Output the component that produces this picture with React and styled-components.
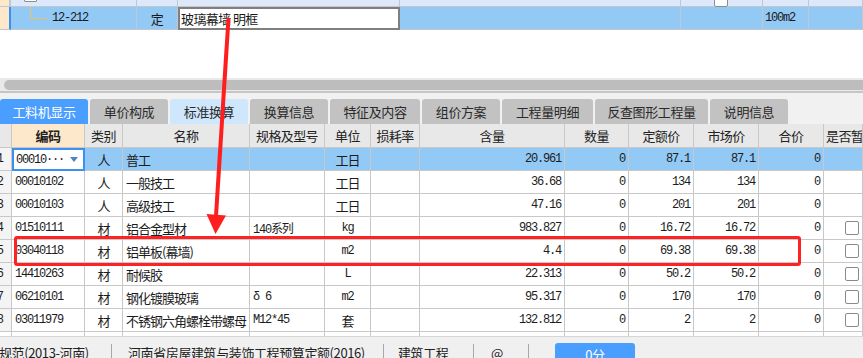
import React from 'react';
import styled, { createGlobalStyle } from 'styled-components';

const CJK = '"Noto Sans CJK SC", "Noto Sans", sans-serif';
const MONO = '"Liberation Mono", "Noto Sans CJK SC", monospace';

const COLS = '12px 73px 38px 127px 75px 46px 49px 145px 64px 65px 65px 65px 1fr';
const TOP_COLS = '11px 126px 41px 222px 281px 82px 46px 1fr';

const GlobalStyle = createGlobalStyle`
    html, body {
        margin: 0;
        padding: 0;
        background: #ffffff;
        overflow: hidden;
    }
    body {
        font-family: ${CJK};
        font-size: 12px;
        color: #1a1a1a;
    }
`;

const Page = styled.div`
    position: relative;
    width: 863px;
    height: 358px;
    overflow: hidden;
    display: flex;
    flex-direction: column;
    background: #ffffff;
`;

const TopRow = styled.div`
    display: grid;
    grid-template-columns: ${TOP_COLS};
    height: ${p => p.$h}px;
    background: ${p => p.$bg};
    flex-shrink: 0;
`;

const TopCell = styled.div`
    position: relative;
    box-sizing: border-box;
    border-right: 1px solid #c2c7cf;
    border-bottom: 1px solid #c2c7cf;
    display: flex;
    align-items: center;
    padding-left: ${p => p.$pad || 0}px;
    justify-content: ${p => p.$center ? 'center' : 'flex-start'};
    font-family: ${p => p.$mono ? MONO : CJK};
    font-size: ${p => p.$mono ? '12px' : '13px'};
    letter-spacing: ${p => p.$mono ? '-1.2px' : '-0.6px'};
    overflow: ${p => p.$open ? 'visible' : 'hidden'};
    white-space: nowrap;
`;

const Leader = styled(TopCell)`
    background: #fde8cc;
    border-right: 2px solid ${p => p.$active ? '#3d8ff0' : '#c2c7cf'};
`;

const TreeCell = styled(TopCell)`
    overflow: visible;
    &::before {
        content: '';
        position: absolute;
        left: 19px;
        top: 0;
        width: 16px;
        height: 11px;
        border-left: 1px solid #f5bd62;
        border-bottom: 1px solid #f5bd62;
    }
`;

const NodeBox = styled.div`
    position: absolute;
    left: 13px;
    top: -7px;
    width: 11px;
    height: 7px;
    border: 1px solid #8d8d8d;
    border-radius: 1px;
    background: #ffffff;
`;

const EditBox = styled.div`
    box-sizing: border-box;
    border: 2px solid #7f7f7f;
    background: #ffffff;
    display: flex;
    align-items: center;
    padding-left: 1px;
    font-size: 13px;
    letter-spacing: -0.6px;
    white-space: nowrap;
`;

const TinyCheck = styled.div`
    position: absolute;
    left: 33px;
    top: -7px;
    width: 12px;
    height: 12px;
    border: 1px solid #8d8d8d;
    border-radius: 2px;
    background: #ffffff;
`;

const Blank = styled.div`
    height: 48px;
    flex-shrink: 0;
    background: #ffffff;
`;

const ScrollZone = styled.div`
    flex-shrink: 0;
    background: #e9e9e9;
    border-bottom: 2px solid #c6c6c6;
    padding: 2px 0 0 4px;
    height: 11px;
`;

const Thumb = styled.div`
    height: 10px;
    background: #bdbdbd;
    border-radius: 5px 0 0 5px;
`;

const TabBar = styled.div`
    height: 31px;
    box-sizing: border-box;
    flex-shrink: 0;
    background: #f1f1f1;
    display: flex;
    align-items: flex-end;
    gap: 2px;
`;

const Tab = styled.div`
    width: ${p => p.$w}px;
    height: 25px;
    flex-shrink: 0;
    border-radius: 3px 3px 0 0;
    display: flex;
    align-items: center;
    justify-content: center;
    font-size: 13px;
    letter-spacing: -0.4px;
    background: ${p => p.$active ? '#4a9eff' : p.$soft ? '#cfe7fc' : '#c2c2c2'};
    color: ${p => p.$active ? '#ffffff' : '#2a2a2a'};
`;

const Row = styled.div`
    display: grid;
    grid-template-columns: ${COLS};
    height: ${p => p.$h || 23}px;
    flex-shrink: 0;
    background: ${p => p.$bg || '#ffffff'};
`;

const Cell = styled.div`
    box-sizing: border-box;
    border-right: 1px solid #c8c8c8;
    border-bottom: 1px solid #c8c8c8;
    display: flex;
    align-items: center;
    overflow: hidden;
    white-space: nowrap;
    justify-content: ${p => p.$align === 'right' ? 'flex-end' : p.$align === 'center' ? 'center' : 'flex-start'};
    padding: 0 ${p => p.$align === 'right' ? 3 : 0}px 0 ${p => p.$align === 'left' ? 3 : 0}px;
    font-family: ${p => p.$mono ? MONO : CJK};
    font-size: ${p => p.$mono ? '12px' : '13px'};
    letter-spacing: ${p => p.$mono ? '-1.2px' : '-1px'};
    color: #1c1c1c;
    background: ${p => p.$bg || 'transparent'};
`;

const HeadCell = styled(Cell)`
    background: ${p => p.$bg || '#e8e8e8'};
    font-weight: ${p => p.$bold ? 700 : 400};
    font-size: 13px;
    letter-spacing: -0.6px;
    color: #222222;
`;

const NumCell = styled(Cell)`
    justify-content: flex-end;
    padding-right: 8px;
    background: #f4f4f4;
    font-family: ${MONO};
    font-size: 12px;
`;

const CodeEdit = styled.div`
    box-sizing: border-box;
    border: 2px solid #3d8ff0;
    background: #ffffff;
    display: flex;
    align-items: center;
    justify-content: space-between;
    padding: 0 5px 0 2px;
    font-family: ${MONO};
    font-size: 12px;
    letter-spacing: -1.2px;
    white-space: nowrap;
`;

const Caret = styled.span`
    width: 0;
    height: 0;
    border-left: 4px solid transparent;
    border-right: 4px solid transparent;
    border-top: 5px solid #4f82c2;
`;

const Check = styled.div`
    width: 12px;
    height: 12px;
    margin-left: 21px;
    border: 1px solid #8a8a8a;
    border-radius: 2px;
    background: #ffffff;
`;

const StatusBar = styled.div`
    height: 22px;
    flex-shrink: 0;
    box-sizing: border-box;
    border-top: 1px solid #d6d6d6;
    background: #f0f0f0;
    display: flex;
    align-items: flex-start;
    padding-top: 7px;
    font-size: 13px;
    letter-spacing: -0.4px;
    color: #222222;
    white-space: nowrap;
`;

const StatusItem = styled.span`
    width: ${p => p.$w}px;
    flex-shrink: 0;
    padding-left: ${p => p.$pl || 0}px;
    box-sizing: border-box;
    overflow: hidden;
    line-height: 18px;
    border-right: ${p => p.$sep ? '1px solid #a8a8a8' : 'none'};
    height: 16px;
`;

const ScoreButton = styled.div`
    margin-left: 26px;
    width: 80px;
    height: 20px;
    margin-top: -1px;
    border-radius: 3px;
    background: #4a9eff;
    color: #ffffff;
    display: flex;
    justify-content: center;
    padding-top: 2px;
    box-sizing: border-box;
    font-size: 13px;
`;

const Highlight = styled.div`
    position: absolute;
    left: 14px;
    top: 236px;
    width: 787px;
    height: 30px;
    box-sizing: border-box;
    border: 3px solid #ff2222;
    border-radius: 3px;
    pointer-events: none;
`;

const Overlay = styled.svg`
    position: absolute;
    left: 0;
    top: 0;
    pointer-events: none;
`;

const tabs = [
    { t: '工料机显示', w: 88, active: true },
    { t: '单价构成', w: 78 },
    { t: '标准换算', w: 78, soft: true },
    { t: '换算信息', w: 78 },
    { t: '特征及内容', w: 90 },
    { t: '组价方案', w: 78 },
    { t: '工程量明细', w: 91 },
    { t: '反查图形工程量', w: 113 },
    { t: '说明信息', w: 78 },
];

const rows = [
    { code: '00010102', kind: '人', name: '一般技工', spec: '', unit: '工日', qty: '36.68', dp: '134', mp: '134' },
    { code: '00010103', kind: '人', name: '高级技工', spec: '', unit: '工日', qty: '47.16', dp: '201', mp: '201' },
    { code: '01510111', kind: '材', name: '铝合金型材', spec: '140系列', unit: 'kg', qty: '983.827', dp: '16.72', mp: '16.72', check: true },
    { code: '03040118', kind: '材', name: '铝单板(幕墙)', spec: '', unit: 'm2', qty: '4.4', dp: '69.38', mp: '69.38', check: true },
    { code: '14410263', kind: '材', name: '耐候胶', spec: '', unit: 'L', qty: '22.313', dp: '50.2', mp: '50.2', check: true },
    { code: '06210101', kind: '材', name: '钢化镀膜玻璃', spec: 'δ 6', unit: 'm2', qty: '95.317', dp: '170', mp: '170', check: true },
    { code: '03011979', kind: '材', name: '不锈钢六角螺栓带螺母', spec: 'M12*45', unit: '套', qty: '132.812', dp: '2', mp: '2', check: true },
];

const isLatin = s => /^[\x00-\x7f]+$/.test(s);

export default function App() {
    return (
        <>
            <GlobalStyle />
            <Page>
                <TopRow $h={7} $bg="#dde9fb">
                    <Leader />
                    <TopCell $open><NodeBox /></TopCell>
                    <TopCell />
                    <TopCell />
                    <TopCell />
                    <TopCell $open><TinyCheck /></TopCell>
                    <TopCell />
                    <TopCell />
                </TopRow>
                <TopRow $h={23} $bg="#93c9f5">
                    <Leader $active />
                    <TreeCell $mono $pad={41}>12-212</TreeCell>
                    <TopCell $center>定</TopCell>
                    <EditBox>玻璃幕墙 明框</EditBox>
                    <TopCell />
                    <TopCell />
                    <TopCell $mono $pad={2}>100m2</TopCell>
                    <TopCell />
                </TopRow>

                <Blank />
                <ScrollZone><Thumb /></ScrollZone>

                <TabBar>
                    {tabs.map(tab => (
                        <Tab key={tab.t} $w={tab.w} $active={tab.active} $soft={tab.soft}>{tab.t}</Tab>
                    ))}
                </TabBar>

                <Row $h={24}>
                    <HeadCell />
                    <HeadCell $align="center" $bg="#fde8cc" $bold>编码</HeadCell>
                    <HeadCell $align="center">类别</HeadCell>
                    <HeadCell $align="center">名称</HeadCell>
                    <HeadCell $align="center">规格及型号</HeadCell>
                    <HeadCell $align="center">单位</HeadCell>
                    <HeadCell $align="center">损耗率</HeadCell>
                    <HeadCell $align="center">含量</HeadCell>
                    <HeadCell $align="center">数量</HeadCell>
                    <HeadCell $align="center">定额价</HeadCell>
                    <HeadCell $align="center">市场价</HeadCell>
                    <HeadCell $align="center">合价</HeadCell>
                    <HeadCell $align="left" style={{ paddingLeft: 2 }}>是否暂</HeadCell>
                </Row>

                <Row $bg="#93c9f5">
                    <NumCell>1</NumCell>
                    <CodeEdit>00010···<Caret /></CodeEdit>
                    <Cell $align="center">人</Cell>
                    <Cell $align="left">普工</Cell>
                    <Cell />
                    <Cell $align="center">工日</Cell>
                    <Cell />
                    <Cell $align="right" $mono>20.961</Cell>
                    <Cell $align="right" $mono>0</Cell>
                    <Cell $align="right" $mono>87.1</Cell>
                    <Cell $align="right" $mono>87.1</Cell>
                    <Cell $align="right" $mono>0</Cell>
                    <Cell />
                </Row>

                {rows.map((r, i) => (
                    <Row key={r.code}>
                        <NumCell>{i + 2}</NumCell>
                        <Cell $align="left" $mono>{r.code}</Cell>
                        <Cell $align="center">{r.kind}</Cell>
                        <Cell $align="left">{r.name}</Cell>
                        <Cell $align="left" $mono>{r.spec}</Cell>
                        <Cell $align="center" $mono={isLatin(r.unit)}>{r.unit}</Cell>
                        <Cell />
                        <Cell $align="right" $mono>{r.qty}</Cell>
                        <Cell $align="right" $mono>0</Cell>
                        <Cell $align="right" $mono>{r.dp}</Cell>
                        <Cell $align="right" $mono>{r.mp}</Cell>
                        <Cell $align="right" $mono>0</Cell>
                        <Cell>{r.check && <Check />}</Cell>
                    </Row>
                ))}

                <Row $h={4}>
                    {Array.from({ length: 13 }).map((_, i) => (
                        <Cell key={i} style={{ borderBottom: 'none' }} />
                    ))}
                </Row>

                <StatusBar>
                    <StatusItem $w={113} $sep style={{ marginLeft: -1 }}>规范(2013-河南)</StatusItem>
                    <StatusItem $w={272} $pl={16} $sep>河南省房屋建筑与装饰工程预算定额(2016)</StatusItem>
                    <StatusItem $w={90} $pl={14} $sep>建筑工程</StatusItem>
                    <StatusItem $w={55} $pl={17} $sep>@</StatusItem>
                    <ScoreButton>0分</ScoreButton>
                </StatusBar>

                <Highlight />
                <Overlay width="863" height="358" viewBox="0 0 863 358">
                    <line x1="228.5" y1="18" x2="216" y2="216" stroke="#ff1e1e" strokeWidth="4" />
                    <polygon points="206.5,214 226,215.5 215.5,234" fill="#ff1e1e" />
                </Overlay>
            </Page>
        </>
    );
}
